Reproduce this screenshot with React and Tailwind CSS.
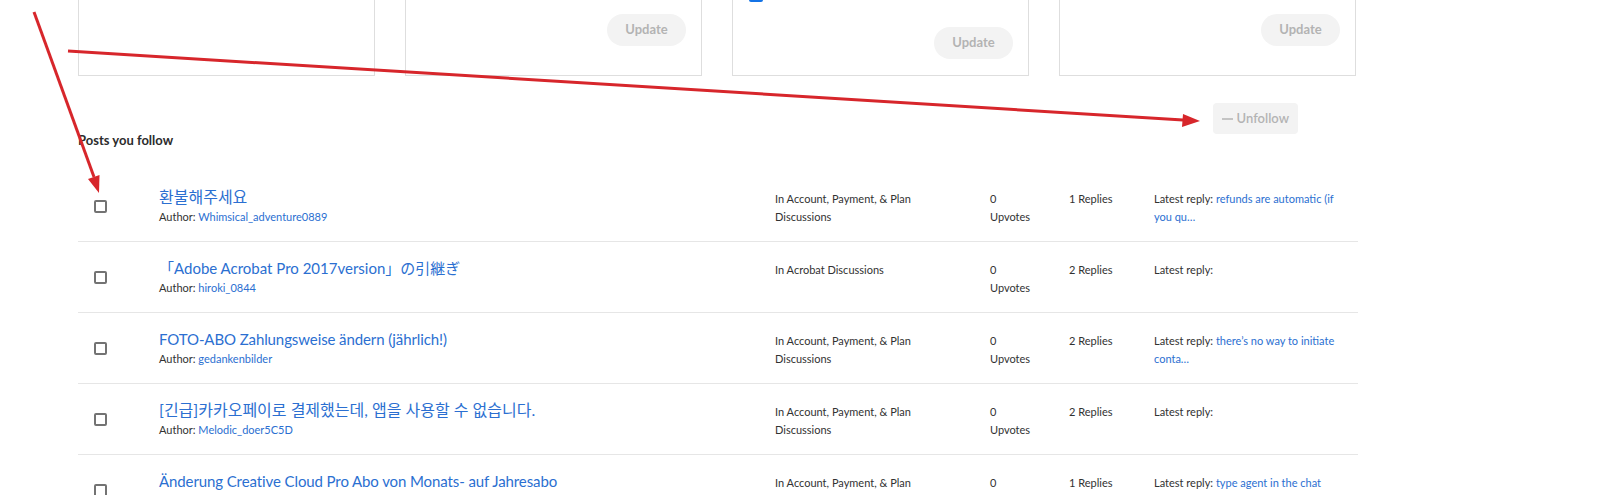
import React from 'react'

const posts = [
  {
    title: '환불해주세요',
    author: 'Whimsical_adventure0889',
    board: 'In Account, Payment, & Plan Discussions',
    replies: '1 Replies',
    latest: 'refunds are automatic (if you qu…',
    ko: true,
  },
  {
    title: '「Adobe Acrobat Pro 2017version」の引継ぎ',
    author: 'hiroki_0844',
    board: 'In Acrobat Discussions',
    replies: '2 Replies',
    latest: '',
    jp: true,
  },
  {
    title: 'FOTO-ABO Zahlungsweise ändern (jährlich!)',
    author: 'gedankenbilder',
    board: 'In Account, Payment, & Plan Discussions',
    replies: '2 Replies',
    latest: 'there\u2019s no way to initiate conta…',
  },
  {
    title: '[긴급]카카오페이로 결제했는데, 앱을 사용할 수 없습니다.',
    author: 'Melodic_doer5C5D',
    board: 'In Account, Payment, & Plan Discussions',
    replies: '2 Replies',
    latest: '',
    ko: true,
  },
  {
    title: 'Änderung Creative Cloud Pro Abo von Monats- auf Jahresabo',
    author: 'Ninnsaavedra',
    board: 'In Account, Payment, & Plan Discussions',
    replies: '1 Replies',
    latest: 'type agent in the chat',
  },
]

function UpdateButton() {
  return (
    <button className="h-[32px] w-[79px] rounded-full bg-[#f3f3f3] text-[13px] font-bold text-[#b3b3b3]">
      Update
    </button>
  )
}

function Checkbox() {
  return <span className="block h-[13px] w-[13px] rounded-[2px] border-2 border-[#737373] bg-white" />
}

function titleClass(post) {
  if (post.jp) return "text-[15px] leading-[20px] text-[#2b6fd1] font-['Lato','Noto_Sans_CJK_JP',sans-serif]"
  if (post.ko) return 'text-[16px] leading-[20px] text-[#2b6fd1]'
  return 'text-[15px] leading-[20px] tracking-[-0.1px] text-[#2b6fd1]'
}

function PostRow({ post }) {
  return (
    <div className="grid h-[71px] grid-cols-[81px_616px_215px_79px_85px_1fr] border-b border-[#e6e6e6] text-[11px] leading-[18px] text-[#323232]">
      <div className="flex items-center pl-[16px]">
        <Checkbox />
      </div>
      <div className="pt-[16px]">
        <div className={titleClass(post)}>{post.title}</div>
        <div className="mt-[2px] leading-[16px]">
          Author: <span className="text-[#2b6fd1]">{post.author}</span>
        </div>
      </div>
      <div className="pt-[19px]">
        <div className="w-[150px]">{post.board}</div>
      </div>
      <div className="pt-[19px]">
        <div>0</div>
        <div>Upvotes</div>
      </div>
      <div className="pt-[19px]">{post.replies}</div>
      <div className="pt-[19px] pr-[18px]">
        Latest reply: {post.latest && <span className="text-[#2b6fd1]">{post.latest}</span>}
      </div>
    </div>
  )
}

export default function App() {
  return (
    <div className="relative h-[495px] w-[1598px] overflow-hidden bg-white font-['Lato','Noto_Sans_CJK_KR',sans-serif]">
      <div className="w-[1358px] pl-[78px]">
        {/* Preference cards, cut by the top edge */}
        <div className="-mt-[40px] grid w-[1278px] grid-cols-4 gap-[30px]">
          <div className="h-[116px] border border-[#dedede]" />
          <div className="flex h-[116px] flex-col items-end justify-end border border-[#dedede] pr-[15px] pb-[29px]">
            <UpdateButton />
          </div>
          <div className="flex h-[116px] flex-col border border-[#dedede] pr-[15px] pb-[16px] pl-[16px]">
            <span className="mt-[27px] block h-[14px] w-[14px] rounded-[2px] bg-[#1473e6]" />
            <div className="mt-auto flex justify-end">
              <UpdateButton />
            </div>
          </div>
          <div className="flex h-[116px] flex-col items-end justify-end border border-[#dedede] pr-[15px] pb-[29px]">
            <UpdateButton />
          </div>
        </div>

        <div className="mt-[27px] flex items-start justify-between">
          <h2 className="pt-[29px] text-[13px] leading-[16px] font-bold text-[#2c2c2c]">Posts you follow</h2>
          <button className="mr-[60px] flex h-[31px] items-center gap-[4px] rounded-[4px] bg-[#f3f3f3] px-[9px] text-[13px] font-semibold text-[#b3b3b3]">
            <span className="block h-[2px] w-[11px] bg-[#c4c4c4]" />
            Unfollow
          </button>
        </div>

        <div className="mt-[23px]">
          {posts.map((p, i) => (
            <PostRow key={i} post={p} />
          ))}
        </div>
      </div>

      {/* annotation arrows */}
      <svg className="pointer-events-none absolute top-0 left-0" width="1598" height="495">
        <line x1="34" y1="12" x2="94" y2="177" stroke="#d7262b" strokeWidth="3" />
        <polygon points="99,193 88,179 99.5,175" fill="#d7262b" />
        <line x1="68" y1="51" x2="1183" y2="120" stroke="#d7262b" strokeWidth="3" />
        <polygon points="1200,121 1182,127 1183,114" fill="#d7262b" />
      </svg>
    </div>
  )
}
